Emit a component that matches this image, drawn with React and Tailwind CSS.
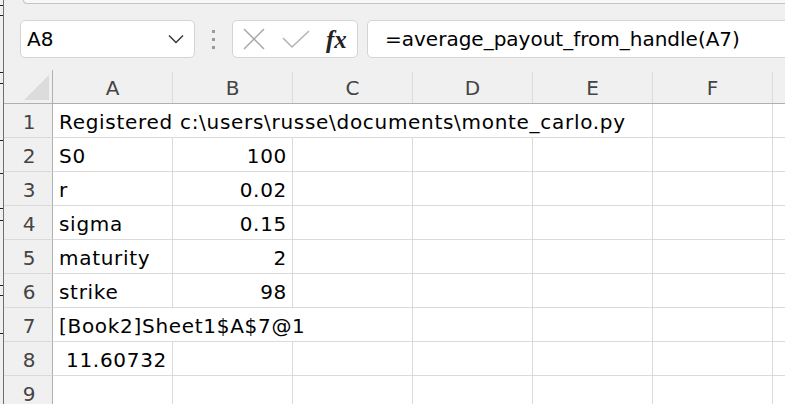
import React from 'react'

const COLS = ['A', 'B', 'C', 'D', 'E', 'F']

// each row: list of cells { span, text, right }
const ROWS = [
  [{ span: 5, text: 'Registered c:\\users\\russe\\documents\\monte_carlo.py' }, {}],
  [{ text: 'S0' }, { text: '100', right: true }, {}, {}, {}, {}],
  [{ text: 'r' }, { text: '0.02', right: true }, {}, {}, {}, {}],
  [{ text: 'sigma' }, { text: '0.15', right: true }, {}, {}, {}, {}],
  [{ text: 'maturity' }, { text: '2', right: true }, {}, {}, {}, {}],
  [{ text: 'strike' }, { text: '98', right: true }, {}, {}, {}, {}],
  [{ span: 3, text: '[Book2]Sheet1$A$7@1' }, {}, {}, {}],
  [{ text: '11.60732', right: true }, {}, {}, {}, {}, {}],
  [{}, {}, {}, {}, {}, {}],
]

const TICKS = [5, 15, 72, 83, 140, 173, 208, 220, 285, 295, 333]

function Cell({ span = 1, text, right }) {
  const w = span === 5 ? 'w-[600px]' : span === 3 ? 'w-[360px]' : 'w-[120px]'
  return (
    <div className={`${w} shrink-0 h-full border-r border-[#dadada] flex items-center pt-[3px] px-[5px] whitespace-nowrap tracking-[0.7px] ${right ? 'justify-end' : 'justify-start pl-[6px]'}`}>
      {text}
    </div>
  )
}

export default function App() {
  return (
    <div className="w-[785px] h-[404px] overflow-hidden bg-[#f0f0f0] flex font-['DejaVu_Sans',sans-serif] text-[20px] text-black">
      {/* left window edge */}
      <div className="relative w-[4px] shrink-0 border-r border-[#6e6e6e]">
        {TICKS.map((y) => (
          <div key={y} className="absolute left-0 w-[3px] h-px bg-[#222]" style={{ top: y }} />
        ))}
      </div>

      <div className="flex-1 flex flex-col min-w-0">
        {/* top ribbon edge */}
        <div className="shrink-0 h-[4px] ml-[19px] -mr-[10px] bg-[#f8f8f8] border-b border-l border-[#c4c4c4] rounded-bl-[6px]" />

        {/* formula bar */}
        <div className="shrink-0 flex items-center mt-[16px] h-[38px]">
          <div className="ml-[16px] w-[175px] h-full bg-white border border-[#d4d4d4] rounded-[5px] flex items-center justify-between pl-[6px] pr-[10px]">
            <span className="leading-none">A8</span>
            <svg width="16" height="10" viewBox="0 0 16 10" fill="none">
              <polyline points="1,1.5 8,8.5 15,1.5" stroke="#333" strokeWidth="1.4" />
            </svg>
          </div>
          <div className="w-[37px] flex flex-col items-center gap-[5px]">
            <div className="w-[3px] h-[3px] bg-[#9a9a9a]" />
            <div className="w-[3px] h-[3px] bg-[#9a9a9a]" />
            <div className="w-[3px] h-[3px] bg-[#9a9a9a]" />
          </div>
          <div className="w-[126px] h-full bg-white border border-[#d4d4d4] rounded-[5px] flex items-center pl-[10px]">
            <svg width="22" height="22" viewBox="0 0 22 22" fill="none">
              <line x1="1" y1="1" x2="21" y2="21" stroke="#a6a6a6" strokeWidth="1.5" />
              <line x1="21" y1="1" x2="1" y2="21" stroke="#a6a6a6" strokeWidth="1.5" />
            </svg>
            <svg className="ml-[17px]" width="28" height="20" viewBox="0 0 28 20" fill="none">
              <polyline points="1,9 10,18 27,2" stroke="#b4b4b4" strokeWidth="1.5" />
            </svg>
            <span className="ml-[16px] font-['Liberation_Serif',serif] italic font-bold text-[25px] leading-none text-[#222]">fx</span>
          </div>
          <div className="ml-[9px] -mr-[10px] flex-1 h-full bg-white border border-[#d4d4d4] rounded-[5px] flex items-center pl-[17px] whitespace-nowrap">
            =average_payout_from_handle(A7)
          </div>
        </div>

        {/* column headers */}
        <div className="shrink-0 flex h-[34px] mt-[12px] text-[#444] border-b border-[#b0b0b0]">
          <div className="w-[48px] shrink-0 h-full relative">
            <div className="absolute right-[3px] bottom-[3px] w-0 h-0 border-l-[25px] border-l-transparent border-b-[25px] border-b-[#dcdcdc]" />
          </div>
          <div className="flex border-l border-[#b0b0b0] h-full pt-[2px]">
            {COLS.map((c) => (
              <div key={c} className="w-[120px] shrink-0 border-r border-[#dadada] flex items-center justify-center">
                {c}
              </div>
            ))}
          </div>
        </div>

        {/* grid */}
        {ROWS.map((cells, i) => (
          <div key={i} className="flex h-[34px] shrink-0">
            <div className="w-[48px] shrink-0 flex items-center justify-center pt-[3px] pl-[2px] text-[#444] border-b border-[#dadada]">
              {i + 1}
            </div>
            <div className="flex flex-1 bg-white border-l border-[#b0b0b0] border-b border-b-[#dadada]">
              {cells.map((cell, j) => (
                <Cell key={j} {...cell} />
              ))}
              <div className="flex-1" />
            </div>
          </div>
        ))}
      </div>
    </div>
  )
}
